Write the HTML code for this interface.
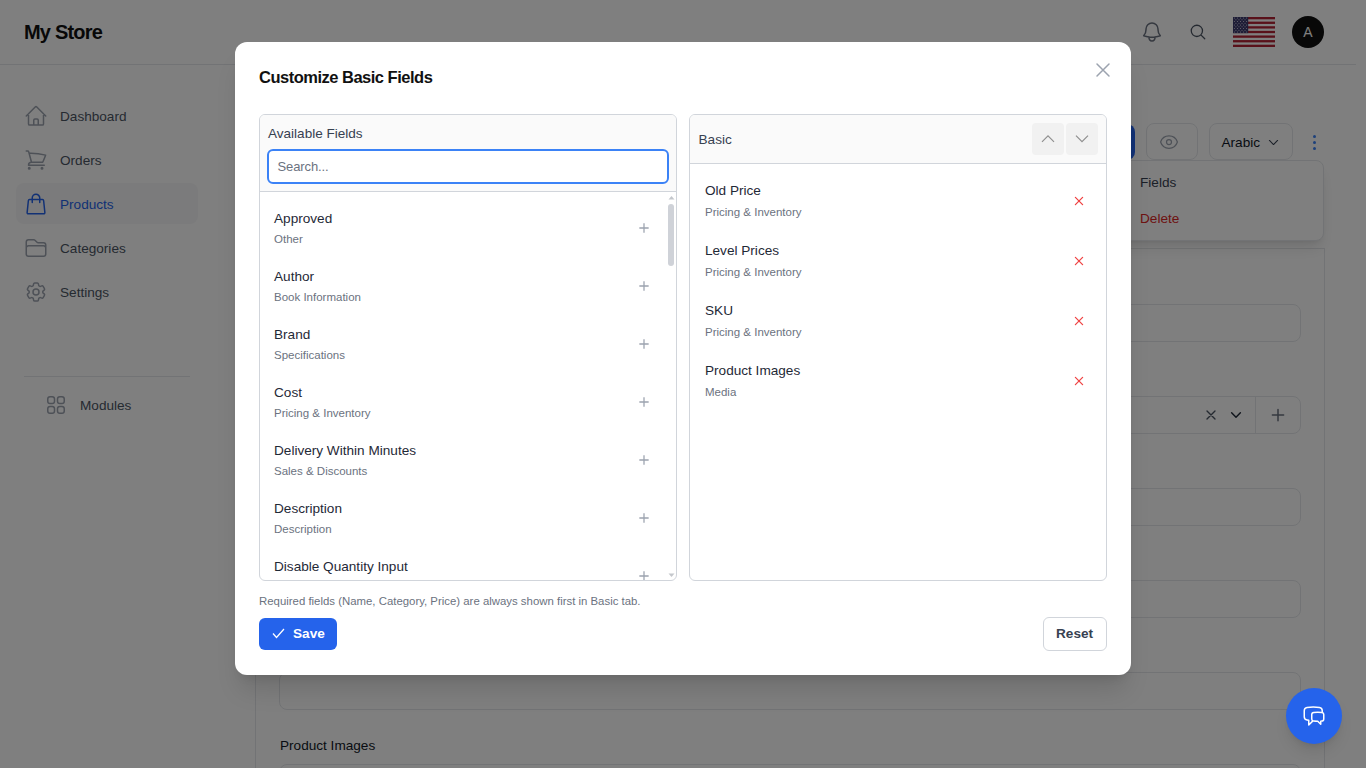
<!DOCTYPE html>
<html><head><meta charset="utf-8">
<style>
*{box-sizing:border-box;margin:0;padding:0}
html,body{width:1366px;height:768px;overflow:hidden;background:#fff}
body{font-family:"Liberation Sans",sans-serif;position:relative;color:#111827}
.abs{position:absolute}
svg{display:block}
.hdr{left:0;top:0;width:1356px;height:65px;border-bottom:1px solid #e5e7eb;background:#fff}
.logo{left:24px;top:20px;font-size:20px;font-weight:700;letter-spacing:-0.8px;color:#111;line-height:24px}
.nav{left:60px;font-size:13.6px;color:#4b5563;line-height:17px}
.ico{stroke:#9ca3af;fill:none;stroke-width:1.5;stroke-linecap:round;stroke-linejoin:round}
.vline{background:#e5e7eb}
.inp{border:1px solid #e5e7eb;border-radius:8px;background:#fff}
.overlay{left:0;top:0;width:1366px;height:768px;background:rgba(0,0,0,0.5)}
.modal{left:235px;top:41.6px;width:896px;height:633.4px;background:#fff;border-radius:12px;box-shadow:0 20px 25px -5px rgba(0,0,0,.12),0 8px 10px -6px rgba(0,0,0,.1)}
.title{left:24px;top:25.5px;font-size:16.5px;font-weight:700;color:#111;line-height:20px;letter-spacing:-0.5px}
.panel{border:1px solid #d1d5db;border-radius:6px;overflow:hidden;background:#fff}
.ph{background:#fafafa;border-bottom:1px solid #d1d5db}
.nm{font-size:13.6px;color:#1f2937;line-height:16px;white-space:nowrap}
.ct{font-size:11.5px;color:#6b7280;line-height:14px;white-space:nowrap}
</style></head><body>

<!-- background page -->
<div class="abs hdr"></div>
<div class="abs logo">My Store</div>
<svg class="abs" style="left:1140px;top:20px" width="24" height="24" viewBox="0 0 24 24"><path class="ico" style="stroke:#6b7280" d="M14.857 17.082a23.848 23.848 0 0 0 5.454-1.31A8.967 8.967 0 0 1 18 9.75V9A6 6 0 0 0 6 9v.75a8.967 8.967 0 0 1-2.312 6.022c1.733.64 3.56 1.085 5.455 1.31m5.714 0a24.255 24.255 0 0 1-5.714 0m5.714 0a3 3 0 1 1-5.714 0"/></svg>
<svg class="abs" style="left:1189px;top:23px" width="18" height="18" viewBox="0 0 24 24"><path class="ico" style="stroke:#4b5563;stroke-width:1.7" d="m21 21-5.197-5.197m0 0A7.5 7.5 0 1 0 5.196 5.196a7.5 7.5 0 0 0 10.607 10.607Z"/></svg>
<!-- flag -->
<svg class="abs" style="left:1233px;top:17px" width="42" height="30" viewBox="0 0 42 30"><rect width="42" height="30" fill="#fff"/><g fill="#b22234"><rect y="0.00" width="42" height="2.31"/><rect y="4.62" width="42" height="2.31"/><rect y="9.23" width="42" height="2.31"/><rect y="13.85" width="42" height="2.31"/><rect y="18.46" width="42" height="2.31"/><rect y="23.08" width="42" height="2.31"/><rect y="27.69" width="42" height="2.31"/></g><rect width="15.2" height="16.15" fill="#3c3b6e"/><g fill="#fff" opacity=".8"><circle cx="1.40" cy="1.00" r=".55"/><circle cx="4.45" cy="1.00" r=".55"/><circle cx="7.50" cy="1.00" r=".55"/><circle cx="10.55" cy="1.00" r=".55"/><circle cx="13.60" cy="1.00" r=".55"/><circle cx="2.90" cy="2.75" r=".55"/><circle cx="5.95" cy="2.75" r=".55"/><circle cx="9.00" cy="2.75" r=".55"/><circle cx="12.05" cy="2.75" r=".55"/><circle cx="1.40" cy="4.50" r=".55"/><circle cx="4.45" cy="4.50" r=".55"/><circle cx="7.50" cy="4.50" r=".55"/><circle cx="10.55" cy="4.50" r=".55"/><circle cx="13.60" cy="4.50" r=".55"/><circle cx="2.90" cy="6.25" r=".55"/><circle cx="5.95" cy="6.25" r=".55"/><circle cx="9.00" cy="6.25" r=".55"/><circle cx="12.05" cy="6.25" r=".55"/><circle cx="1.40" cy="8.00" r=".55"/><circle cx="4.45" cy="8.00" r=".55"/><circle cx="7.50" cy="8.00" r=".55"/><circle cx="10.55" cy="8.00" r=".55"/><circle cx="13.60" cy="8.00" r=".55"/><circle cx="2.90" cy="9.75" r=".55"/><circle cx="5.95" cy="9.75" r=".55"/><circle cx="9.00" cy="9.75" r=".55"/><circle cx="12.05" cy="9.75" r=".55"/><circle cx="1.40" cy="11.50" r=".55"/><circle cx="4.45" cy="11.50" r=".55"/><circle cx="7.50" cy="11.50" r=".55"/><circle cx="10.55" cy="11.50" r=".55"/><circle cx="13.60" cy="11.50" r=".55"/><circle cx="2.90" cy="13.25" r=".55"/><circle cx="5.95" cy="13.25" r=".55"/><circle cx="9.00" cy="13.25" r=".55"/><circle cx="12.05" cy="13.25" r=".55"/><circle cx="1.40" cy="15.00" r=".55"/><circle cx="4.45" cy="15.00" r=".55"/><circle cx="7.50" cy="15.00" r=".55"/><circle cx="10.55" cy="15.00" r=".55"/><circle cx="13.60" cy="15.00" r=".55"/></g></svg>
<div class="abs" style="left:1292px;top:16px;width:32px;height:32px;border-radius:50%;background:#111;color:#fff;font-size:14px;line-height:32px;text-align:center">A</div>

<!-- sidebar -->
<svg class="abs" style="left:24px;top:104px" width="24" height="24" viewBox="0 0 24 24"><path class="ico" d="m2.25 12 8.954-8.955c.44-.439 1.152-.439 1.591 0L21.75 12M4.5 9.75v10.125c0 .621.504 1.125 1.125 1.125H9.75v-4.875c0-.621.504-1.125 1.125-1.125h2.25c.621 0 1.125.504 1.125 1.125V21h4.125c.621 0 1.125-.504 1.125-1.125V9.75M8.25 21h8.25"/></svg>
<div class="abs nav" style="top:108px">Dashboard</div>
<svg class="abs" style="left:24px;top:148px" width="24" height="24" viewBox="0 0 24 24"><path class="ico" d="M2.25 3h1.386c.51 0 .955.343 1.087.835l.383 1.437M7.5 14.25a3 3 0 0 0-3 3h15.75m-12.75-3h11.218c1.121-2.3 2.1-4.684 2.924-7.138a60.114 60.114 0 0 0-16.536-1.84M7.5 14.25 5.106 5.272M6 20.25a.75.75 0 1 1-1.5 0 .75.75 0 0 1 1.5 0Zm12.75 0a.75.75 0 1 1-1.5 0 .75.75 0 0 1 1.5 0Z"/></svg>
<div class="abs nav" style="top:152px">Orders</div>
<div class="abs" style="left:16px;top:183px;width:182px;height:41px;border-radius:8px;background:#f7f7f8"></div>
<svg class="abs" style="left:24px;top:192px" width="24" height="24" viewBox="0 0 24 24"><path class="ico" style="stroke:#2563eb" d="M15.75 10.5V6a3.75 3.75 0 1 0-7.5 0v4.5m11.356-1.993 1.263 12c.07.665-.45 1.243-1.119 1.243H4.25a1.125 1.125 0 0 1-1.12-1.243l1.264-12A1.125 1.125 0 0 1 5.513 7.5h12.974c.576 0 1.059.435 1.119 1.007Z"/></svg>
<div class="abs nav" style="top:196px;color:#2563eb">Products</div>
<svg class="abs" style="left:24px;top:236px" width="24" height="24" viewBox="0 0 24 24"><path class="ico" d="M2.25 12.75V12A2.25 2.25 0 0 1 4.5 9.75h15A2.25 2.25 0 0 1 21.75 12v.75m-8.69-6.44-2.12-2.12a1.5 1.5 0 0 0-1.061-.44H4.5A2.25 2.25 0 0 0 2.25 6v12a2.25 2.25 0 0 0 2.25 2.25h15A2.25 2.25 0 0 0 21.75 18V9a2.25 2.25 0 0 0-2.25-2.25h-5.379a1.5 1.5 0 0 1-1.06-.44Z"/></svg>
<div class="abs nav" style="top:240px">Categories</div>
<svg class="abs" style="left:24px;top:280px" width="24" height="24" viewBox="0 0 24 24"><path class="ico" d="M9.594 3.94c.09-.542.56-.94 1.11-.94h2.593c.55 0 1.02.398 1.11.94l.213 1.281c.063.374.313.686.645.87.074.04.147.083.22.127.325.196.72.257 1.075.124l1.217-.456a1.125 1.125 0 0 1 1.37.49l1.296 2.247a1.125 1.125 0 0 1-.26 1.431l-1.003.827c-.293.241-.438.613-.43.992a7.723 7.723 0 0 1 0 .255c-.008.378.137.75.43.991l1.004.827c.424.35.534.955.26 1.43l-1.298 2.247a1.125 1.125 0 0 1-1.369.491l-1.217-.456c-.355-.133-.75-.072-1.076.124a6.47 6.47 0 0 1-.22.128c-.331.183-.581.495-.644.869l-.213 1.281c-.09.543-.56.94-1.11.94h-2.594c-.55 0-1.019-.398-1.11-.94l-.213-1.281c-.062-.374-.312-.686-.644-.87a6.52 6.52 0 0 1-.22-.127c-.325-.196-.72-.257-1.076-.124l-1.217.456a1.125 1.125 0 0 1-1.369-.49l-1.297-2.247a1.125 1.125 0 0 1 .26-1.431l1.004-.827c.292-.24.437-.613.43-.991a6.932 6.932 0 0 1 0-.255c.007-.38-.138-.751-.43-.992l-1.004-.827a1.125 1.125 0 0 1-.26-1.43l1.297-2.247a1.125 1.125 0 0 1 1.37-.491l1.216.456c.356.133.751.072 1.076-.124.072-.044.146-.086.22-.128.332-.183.582-.495.644-.869l.214-1.28Z M15 12a3 3 0 1 1-6 0 3 3 0 0 1 6 0Z"/></svg>
<div class="abs nav" style="top:284px">Settings</div>
<div class="abs vline" style="left:24px;top:376px;width:166px;height:1px"></div>
<svg class="abs" style="left:44px;top:393px" width="24" height="24" viewBox="0 0 24 24"><path class="ico" d="M3.75 6A2.25 2.25 0 0 1 6 3.75h2.25A2.25 2.25 0 0 1 10.5 6v2.25a2.25 2.25 0 0 1-2.25 2.25H6a2.25 2.25 0 0 1-2.25-2.25V6ZM3.75 15.75A2.25 2.25 0 0 1 6 13.5h2.25a2.25 2.25 0 0 1 2.25 2.25V18a2.25 2.25 0 0 1-2.25 2.25H6A2.25 2.25 0 0 1 3.75 18v-2.25ZM13.5 6a2.25 2.25 0 0 1 2.25-2.25H18A2.25 2.25 0 0 1 20.25 6v2.25A2.25 2.25 0 0 1 18 10.5h-2.25a2.25 2.25 0 0 1-2.25-2.25V6ZM13.5 15.75a2.25 2.25 0 0 1 2.25-2.25H18a2.25 2.25 0 0 1 2.25 2.25V18A2.25 2.25 0 0 1 18 20.25h-2.25A2.25 2.25 0 0 1 13.5 18v-2.25Z"/></svg>
<div class="abs nav" style="left:80px;top:397px">Modules</div>

<!-- content card lines -->
<div class="abs vline" style="left:255px;top:248px;width:1px;height:520px"></div>
<div class="abs vline" style="left:1324px;top:248px;width:1px;height:520px"></div>
<div class="abs vline" style="left:255px;top:248px;width:1070px;height:1px"></div>
<!-- toolbar -->
<div class="abs" style="left:1040px;top:123.5px;width:95px;height:36px;border-radius:8px;background:#2563eb"></div>
<div class="abs" style="left:1146px;top:123px;width:51.5px;height:36.5px;border-radius:8px;border:1px solid #e5e7eb"></div>
<svg class="abs" style="left:1159px;top:132px" width="20" height="20" viewBox="0 0 24 24"><path class="ico" d="M2.036 12.322a1.012 1.012 0 0 1 0-.639C3.423 7.51 7.36 4.5 12 4.5c4.638 0 8.573 3.007 9.963 7.178.07.207.07.431 0 .639C20.577 16.49 16.64 19.5 12 19.5c-4.638 0-8.573-3.007-9.963-7.178Z M15 12a3 3 0 1 1-6 0 3 3 0 0 1 6 0Z"/></svg>
<div class="abs" style="left:1208.5px;top:123px;width:84px;height:36.5px;border-radius:8px;border:1px solid #e5e7eb"></div>
<div class="abs" style="left:1221.5px;top:135px;font-size:13.6px;line-height:16px;color:#111827">Arabic</div>
<svg class="abs" style="left:1267px;top:136px" width="13" height="13" viewBox="0 0 24 24"><path class="ico" style="stroke:#374151;stroke-width:2" d="m19.5 8.25-7.5 7.5-7.5-7.5"/></svg>
<div class="abs" style="left:1312.5px;top:134.5px;width:3px;height:3px;border-radius:50%;background:#3b82f6"></div>
<div class="abs" style="left:1312.5px;top:140.5px;width:3px;height:3px;border-radius:50%;background:#3b82f6"></div>
<div class="abs" style="left:1312.5px;top:146.5px;width:3px;height:3px;border-radius:50%;background:#3b82f6"></div>
<!-- dropdown menu -->
<div class="abs" style="left:1000px;top:160px;width:324px;height:81px;border-radius:8px;background:#fff;border:1px solid #e5e7eb;box-shadow:0 10px 15px -3px rgba(0,0,0,.1),0 4px 6px -4px rgba(0,0,0,.1)"></div>
<div class="abs" style="left:1140px;top:174.8px;font-size:13.6px;line-height:16px;color:#374151">Fields</div>
<div class="abs" style="left:1140px;top:210.8px;font-size:13.6px;line-height:16px;color:#dc2626">Delete</div>
<!-- form inputs -->
<div class="abs inp" style="left:279px;top:304px;width:1022px;height:38px"></div>
<div class="abs inp" style="left:279px;top:396px;width:1022px;height:38px"></div>
<div class="abs" style="left:1255px;top:397px;width:1px;height:36px;background:#e5e7eb"></div>
<svg class="abs" style="left:1203px;top:407px" width="16" height="16" viewBox="0 0 24 24"><path class="ico" style="stroke:#4b5563;stroke-width:2" d="M6 18 18 6M6 6l12 12"/></svg>
<svg class="abs" style="left:1229px;top:408px" width="14" height="14" viewBox="0 0 24 24"><path class="ico" style="stroke:#1f2937;stroke-width:2.5" d="m19.5 8.25-7.5 7.5-7.5-7.5"/></svg>
<svg class="abs" style="left:1269px;top:406px" width="18" height="18" viewBox="0 0 24 24"><path class="ico" style="stroke:#6b7280;stroke-width:2" d="M12 4.5v15m7.5-7.5h-15"/></svg>
<div class="abs inp" style="left:279px;top:488px;width:1022px;height:38px"></div>
<div class="abs inp" style="left:279px;top:580px;width:1022px;height:38px"></div>
<div class="abs inp" style="left:279px;top:672px;width:1022px;height:38px"></div>
<div class="abs" style="left:280px;top:737.5px;font-size:13.6px;line-height:16px;color:#111827">Product Images</div>
<div class="abs inp" style="left:279px;top:764px;width:1022px;height:38px"></div>

<!-- overlay -->
<div class="abs overlay"></div>

<!-- chat button -->
<div class="abs" style="left:1286px;top:688px;width:56px;height:56px;border-radius:50%;background:#2563eb;box-shadow:0 10px 15px -3px rgba(0,0,0,.1),0 4px 6px -4px rgba(0,0,0,.1)"></div>
<svg class="abs" style="left:1302px;top:704px" width="24" height="24" viewBox="0 0 24 24"><path class="ico" style="stroke:#fff" d="M20.25 8.511c.884.284 1.5 1.128 1.5 2.097v4.286c0 1.136-.847 2.1-1.98 2.193-.34.027-.68.052-1.02.072v3.091l-3-3c-1.354 0-2.694-.055-4.02-.163a2.115 2.115 0 0 1-.825-.242m9.345-8.334a2.126 2.126 0 0 0-.476-.095 48.64 48.64 0 0 0-8.048 0c-1.131.094-1.976 1.057-1.976 2.192v4.286c0 .837.46 1.58 1.155 1.951m9.345-8.334V6.637c0-1.621-1.152-3.026-2.76-3.235A48.455 48.455 0 0 0 11.25 3c-2.115 0-4.198.137-6.24.402-1.608.209-2.76 1.614-2.76 3.235v6.226c0 1.621 1.152 3.026 2.76 3.235.577.075 1.157.14 1.74.194V21l4.155-4.155"/></svg>

<!-- modal -->
<div class="abs modal">
  <div class="abs title">Customize Basic Fields</div>
  <svg class="abs" style="left:856px;top:16.4px" width="24" height="24" viewBox="0 0 24 24"><path class="ico" d="M6 18 18 6M6 6l12 12"/></svg>

  <!-- left panel -->
  <div class="abs panel" style="left:24px;top:72.4px;width:418px;height:467px">
    <div class="abs ph" style="left:0;top:0;width:416px;height:77px"></div>
    <div class="abs" style="left:8px;top:11px;font-size:13.55px;line-height:16px;color:#374151">Available Fields</div>
    <div class="abs" style="left:7px;top:34px;width:402px;height:35px;border:2px solid #3b82f6;border-radius:6px;background:#fff"></div>
    <div class="abs" style="left:17.5px;top:44px;font-size:13px;line-height:16px;color:#6b7280;letter-spacing:-0.1px">Search...</div>
    <!--L-->
<div class="abs nm" style="left:14px;top:95.6px">Approved</div>
<div class="abs ct" style="left:14px;top:117.0px">Other</div>
<svg class="abs" style="left:376px;top:105px" width="16" height="16" viewBox="0 0 24 24"><path class="ico" style="stroke:#9ca3af;stroke-width:1.9;stroke-linecap:butt" d="M12 5v14M19 12H5"/></svg>
<div class="abs nm" style="left:14px;top:153.6px">Author</div>
<div class="abs ct" style="left:14px;top:175.0px">Book Information</div>
<svg class="abs" style="left:376px;top:163px" width="16" height="16" viewBox="0 0 24 24"><path class="ico" style="stroke:#9ca3af;stroke-width:1.9;stroke-linecap:butt" d="M12 5v14M19 12H5"/></svg>
<div class="abs nm" style="left:14px;top:211.6px">Brand</div>
<div class="abs ct" style="left:14px;top:233.0px">Specifications</div>
<svg class="abs" style="left:376px;top:221px" width="16" height="16" viewBox="0 0 24 24"><path class="ico" style="stroke:#9ca3af;stroke-width:1.9;stroke-linecap:butt" d="M12 5v14M19 12H5"/></svg>
<div class="abs nm" style="left:14px;top:269.6px">Cost</div>
<div class="abs ct" style="left:14px;top:291.0px">Pricing &amp; Inventory</div>
<svg class="abs" style="left:376px;top:279px" width="16" height="16" viewBox="0 0 24 24"><path class="ico" style="stroke:#9ca3af;stroke-width:1.9;stroke-linecap:butt" d="M12 5v14M19 12H5"/></svg>
<div class="abs nm" style="left:14px;top:327.6px">Delivery Within Minutes</div>
<div class="abs ct" style="left:14px;top:349.0px">Sales &amp; Discounts</div>
<svg class="abs" style="left:376px;top:337px" width="16" height="16" viewBox="0 0 24 24"><path class="ico" style="stroke:#9ca3af;stroke-width:1.9;stroke-linecap:butt" d="M12 5v14M19 12H5"/></svg>
<div class="abs nm" style="left:14px;top:385.6px">Description</div>
<div class="abs ct" style="left:14px;top:407.0px">Description</div>
<svg class="abs" style="left:376px;top:395px" width="16" height="16" viewBox="0 0 24 24"><path class="ico" style="stroke:#9ca3af;stroke-width:1.9;stroke-linecap:butt" d="M12 5v14M19 12H5"/></svg>
<div class="abs nm" style="left:14px;top:443.6px">Disable Quantity Input</div>
<div class="abs ct" style="left:14px;top:465.0px">Quantity</div>
<svg class="abs" style="left:376px;top:453px" width="16" height="16" viewBox="0 0 24 24"><path class="ico" style="stroke:#9ca3af;stroke-width:1.9;stroke-linecap:butt" d="M12 5v14M19 12H5"/></svg>
<!--/L-->
    <!-- scrollbar -->
    <div class="abs" style="left:408px;top:89px;width:6px;height:62px;border-radius:3px;background:#cfd2d8"></div>
    <svg class="abs" style="left:408px;top:80px" width="7" height="5" viewBox="0 0 7 5"><path d="M0.5 4.5 3.5 1 6.5 4.5Z" fill="#c4c7cc"/></svg>
    <svg class="abs" style="left:408px;top:458px" width="7" height="5" viewBox="0 0 7 5"><path d="M0.5 0.5 3.5 4 6.5 0.5Z" fill="#c4c7cc"/></svg>
  </div>

  <!-- right panel -->
  <div class="abs panel" style="left:454px;top:72.4px;width:418px;height:467px">
    <div class="abs ph" style="left:0;top:0;width:416px;height:49px"></div>
    <div class="abs" style="left:8.5px;top:17px;font-size:13.6px;line-height:16px;color:#374151">Basic</div>
    <div class="abs" style="left:342px;top:8.5px;width:32px;height:32px;border-radius:4px;background:#f1f1f1"></div>
    <div class="abs" style="left:376px;top:8.5px;width:32px;height:32px;border-radius:4px;background:#f1f1f1"></div>
    <svg class="abs" style="left:350px;top:16.5px" width="16" height="16" viewBox="0 0 16 16"><path d="M2 10.8 8 4.8 14 10.8" fill="none" stroke="#8f8f8f" stroke-width="1.2"/></svg>
    <svg class="abs" style="left:384px;top:16.5px" width="16" height="16" viewBox="0 0 16 16"><path d="M2 4.6 8 10.6 14 4.6" fill="none" stroke="#8f8f8f" stroke-width="1.2"/></svg>
    <!--R-->
<div class="abs nm" style="left:15px;top:68.5px">Old Price</div>
<div class="abs ct" style="left:15px;top:89.9px">Pricing &amp; Inventory</div>
<svg class="abs" style="left:381px;top:78px" width="16" height="16" viewBox="0 0 24 24"><g class="ico" style="stroke:#ef4444;stroke-width:1.9"><line x1="6.6" y1="17.4" x2="17.4" y2="6.6"/><line x1="6.6" y1="6.6" x2="17.4" y2="17.4"/></g></svg>
<div class="abs nm" style="left:15px;top:128.5px">Level Prices</div>
<div class="abs ct" style="left:15px;top:149.9px">Pricing &amp; Inventory</div>
<svg class="abs" style="left:381px;top:138px" width="16" height="16" viewBox="0 0 24 24"><g class="ico" style="stroke:#ef4444;stroke-width:1.9"><line x1="6.6" y1="17.4" x2="17.4" y2="6.6"/><line x1="6.6" y1="6.6" x2="17.4" y2="17.4"/></g></svg>
<div class="abs nm" style="left:15px;top:188.5px">SKU</div>
<div class="abs ct" style="left:15px;top:209.9px">Pricing &amp; Inventory</div>
<svg class="abs" style="left:381px;top:198px" width="16" height="16" viewBox="0 0 24 24"><g class="ico" style="stroke:#ef4444;stroke-width:1.9"><line x1="6.6" y1="17.4" x2="17.4" y2="6.6"/><line x1="6.6" y1="6.6" x2="17.4" y2="17.4"/></g></svg>
<div class="abs nm" style="left:15px;top:248.5px">Product Images</div>
<div class="abs ct" style="left:15px;top:269.9px">Media</div>
<svg class="abs" style="left:381px;top:258px" width="16" height="16" viewBox="0 0 24 24"><g class="ico" style="stroke:#ef4444;stroke-width:1.9"><line x1="6.6" y1="17.4" x2="17.4" y2="6.6"/><line x1="6.6" y1="6.6" x2="17.4" y2="17.4"/></g></svg>
<!--/R-->
  </div>

  <div class="abs" style="left:24px;top:552.4px;font-size:11.4px;line-height:14px;color:#6b7280">Required fields (Name, Category, Price) are always shown first in Basic tab.</div>
  <div class="abs" style="left:24px;top:576.4px;width:78px;height:32px;border-radius:6px;background:#2563eb"></div>
  <svg class="abs" style="left:37px;top:586px" width="13" height="11" viewBox="0 0 13 11"><path d="M1 5.5 4.5 9.5 12 1" fill="none" stroke="#fff" stroke-width="1.25"/></svg>
  <div class="abs" style="left:58px;top:584.4px;font-size:13.6px;font-weight:700;line-height:16px;color:#fff">Save</div>
  <div class="abs" style="left:808px;top:575.4px;width:64px;height:34px;border-radius:6px;border:1px solid #d1d5db;background:#fff"></div>
  <div class="abs" style="left:821px;top:584.4px;font-size:13.6px;font-weight:700;line-height:16px;color:#374151">Reset</div>
</div>

</body></html>
